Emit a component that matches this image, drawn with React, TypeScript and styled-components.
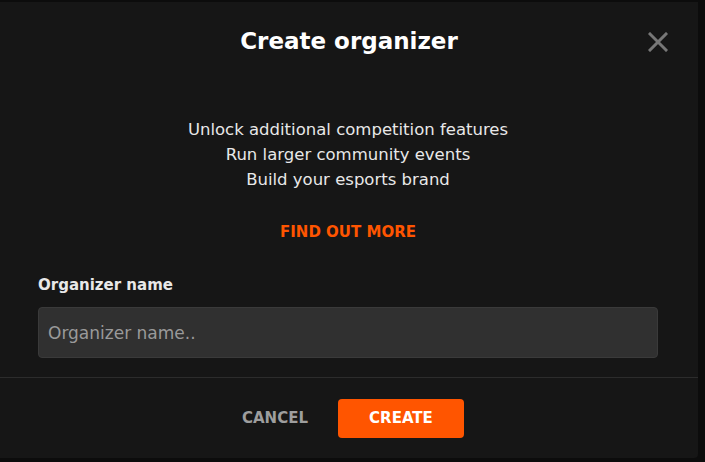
import styled, { createGlobalStyle } from "styled-components";

const GlobalStyle = createGlobalStyle`
  html, body {
    margin: 0;
    padding: 0;
    background: #0c0c0c;
    font-family: "DejaVu Sans", sans-serif;
  }
`;

const Page = styled.div`
  width: 705px;
  height: 462px;
  padding-top: 2px;
  box-sizing: border-box;
  overflow: hidden;
`;

const Modal = styled.div`
  width: 698px;
  height: 456px;
  background: #161616;
  border-radius: 0 0 4px 0;
  display: flex;
  flex-direction: column;
`;

const Header = styled.div`
  position: relative;
  height: 78px;
  display: flex;
  align-items: center;
  justify-content: center;
`;

const Title = styled.h2`
  margin: 0;
  color: #fff;
  font-size: 23px;
  font-weight: 700;
`;

const CloseButton = styled.button`
  position: absolute;
  right: 28px;
  top: 28px;
  width: 24px;
  height: 24px;
  padding: 0;
  border: none;
  background: none;
  cursor: pointer;
  display: flex;
  align-items: center;
  justify-content: center;
`;

const Body = styled.div`
  flex: 1;
  padding: 37px 40px 0 38px;
  display: flex;
  flex-direction: column;
`;

const Perks = styled.div`
  text-align: center;
  color: #e8e8e8;
  font-size: 16.5px;
  line-height: 25px;
`;

const MoreLink = styled.a`
  align-self: center;
  margin-top: 31px;
  color: #ff5500;
  font-size: 15px;
  font-weight: 700;
  text-decoration: none;
  cursor: pointer;
`;

const Label = styled.label`
  margin-top: 35px;
  color: #e8e8e8;
  font-size: 15px;
  font-weight: 700;
`;

const Input = styled.input`
  margin-top: 13px;
  height: 51px;
  box-sizing: border-box;
  padding: 0 9px;
  background: #303030;
  border: 1px solid #3a3a3a;
  border-radius: 4px;
  color: #fff;
  font-family: inherit;
  font-size: 17px;
  outline: none;

  &::placeholder {
    color: #9a9a9a;
  }
`;

const Footer = styled.div`
  height: 80px;
  padding-left: 8px;
  border-top: 1px solid #2c2c2c;
  display: flex;
  align-items: center;
  justify-content: center;
  gap: 30px;
`;

const Button = styled.button<{ $primary?: boolean }>`
  height: 39px;
  padding: 0 ${(p) => (p.$primary ? "30px" : "0")};
  border: none;
  border-radius: 4px;
  background: ${(p) => (p.$primary ? "#ff5500" : "transparent")};
  color: ${(p) => (p.$primary ? "#fff" : "#9e9e9e")};
  font-family: inherit;
  font-size: 15px;
  font-weight: 700;
  cursor: pointer;
  min-width: ${(p) => (p.$primary ? "126px" : "auto")};
`;

const App = () => {
  return (
    <>
      <GlobalStyle />
      <Page>
        <Modal>
          <Header>
            <Title>Create organizer</Title>
            <CloseButton aria-label="Close">
              <svg width="20" height="20" viewBox="0 0 20 20">
                <path
                  d="M2 2 L18 18 M18 2 L2 18"
                  stroke="#777"
                  strokeWidth="3"
                  strokeLinecap="square"
                />
              </svg>
            </CloseButton>
          </Header>
          <Body>
            <Perks>
              Unlock additional competition features
              <br />
              Run larger community events
              <br />
              Build your esports brand
            </Perks>
            <MoreLink>FIND OUT MORE</MoreLink>
            <Label htmlFor="organizer-name">Organizer name</Label>
            <Input id="organizer-name" placeholder="Organizer name.." />
          </Body>
          <Footer>
            <Button>CANCEL</Button>
            <Button $primary>CREATE</Button>
          </Footer>
        </Modal>
      </Page>
    </>
  );
};

export default App;
